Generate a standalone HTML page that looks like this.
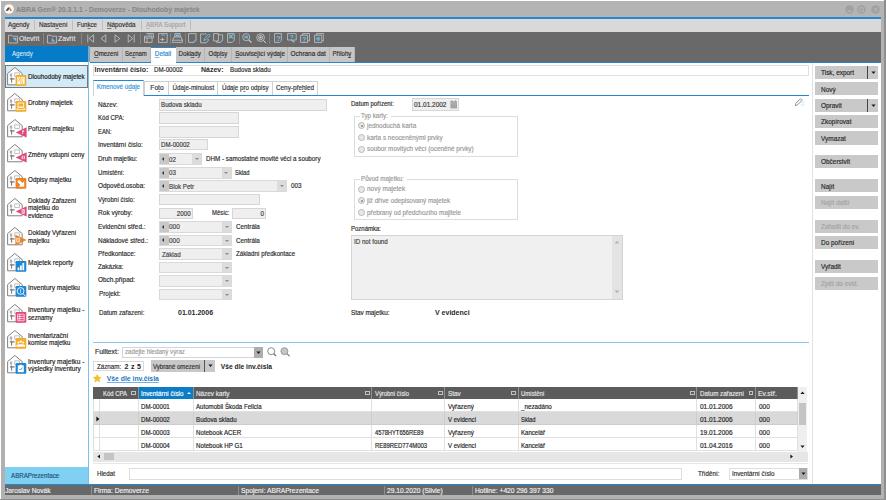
<!DOCTYPE html><html lang="cs"><head><meta charset="utf-8"><title>ABRA Gen - Dlouhodobý majetek</title><style>
*{box-sizing:border-box;margin:0;padding:0}
html,body{width:886px;height:500px;overflow:hidden;background:#fff}
body{-webkit-text-stroke:0.18px currentColor;font-family:"Liberation Sans",sans-serif;font-size:7px;color:#2c2c2c;position:relative;line-height:9px}
.a{position:absolute}
.t{position:absolute;white-space:nowrap;line-height:9px;height:9px}
.b{font-weight:bold;-webkit-text-stroke:0}
.x{display:inline-block;transform:scaleX(.885);transform-origin:0 50%;white-space:nowrap}
.tab .x,.tab2 .x{transform-origin:50% 50%}
.f{position:absolute;background:#efefef;border:1px solid #d6d6d6}
.btn{position:absolute;background:#c9c9c9;left:815px;width:63.2px;height:13.2px;padding:2.3px 0 0 6px;color:#2a2a2a;white-space:nowrap}
.btn.d{color:#a4a4a4}
.tab{position:absolute;top:46.5px;height:15.7px;background:#c6c6c6;border-right:1px solid #b4b4b4;padding-top:2.6px;text-align:center;color:#2e2e2e;white-space:nowrap}
.tab2{position:absolute;top:80.5px;height:15px;background:#fff;border:1px solid #d0d0d0;border-bottom:none;padding-top:1.2px;text-align:center;color:#333;white-space:nowrap}
u{text-decoration:underline;text-decoration-thickness:0.5px;text-underline-offset:0.6px;text-decoration-color:color-mix(in srgb,currentColor 60%,transparent)}
.cb{position:absolute;background:#efefef;border:1px solid #d9d9d9}
.cb .l{position:absolute;left:0;top:0;bottom:0;width:8.6px;background:#c8c8c8}
.cb .l:after{content:"";position:absolute;left:2px;top:50%;margin-top:-2.2px;border:2.2px solid transparent;border-right:2.6px solid #333;border-left:none}
.cb .r{position:absolute;right:0;top:0;bottom:0;width:9px;background:#dcdcdc}
.cb .r:after{content:"";position:absolute;left:2.4px;top:50%;margin-top:-0.8px;border:2.1px solid transparent;border-top:2.2px solid #8a8a8a;border-bottom:none}
.cb span{position:absolute;top:0.2px;white-space:nowrap;color:#444}
.rd{position:absolute;width:7px;height:7px;border-radius:50%;border:1px solid #b8b8b8;background:#e8e8e8}
.rd.on:after{content:"";position:absolute;left:1.2px;top:1.2px;width:2.6px;height:2.6px;border-radius:50%;background:#8a8a8a}
.gt{color:#9a9a9a}
.hd{position:absolute;top:387px;height:12px;background:#5c5c5c;color:#e6e6e6;padding:1.7px 0 0 2.2px;white-space:nowrap;border-right:1px solid #909090}
.hd i{position:absolute;right:1.8px;top:4px;width:4.6px;height:4px;border:0.8px solid #c2c2c2}
.c{position:absolute;height:13px;padding:2.6px 0 0 2.4px;white-space:nowrap;color:#262626;border-right:1px solid #dcdcdc;border-bottom:1px solid #dcdcdc}
.st{position:absolute;top:485.2px;height:10px;color:#efefef;padding-top:0.4px;white-space:nowrap;font-size:7.5px}
.sb{position:absolute;left:27.5px;white-space:nowrap;color:#222;line-height:7.8px}
</style></head><body>
<div class="a" style="left:1px;top:1.3px;width:885px;height:499px;background:#b1b1b1;"></div>
<div class="a" style="left:1px;top:1.3px;width:885px;height:16px;background:#b4b4b4;"></div>
<div class="a" style="left:884.4px;top:0px;width:1.6px;height:500px;background:#8e8e8e;"></div>
<div class="a" style="left:0px;top:498.7px;width:886px;height:1.3px;background:#8e8e8e;"></div>
<svg class="a" style="left:3.8px;top:3.7px" width="10" height="10" viewBox="0 0 10 10"><circle cx="5" cy="5" r="4.8" fill="#fafafa"/><path d="M1.6 6.8 L4.2 3.2 L5.6 4.6 L4 6.8Z" fill="#444"/><path d="M4.2 3.2 L5.5 2.9 L8.2 6.8 L6.6 6.8Z" fill="#f08a1a"/><path d="M5.6 4.6 L7.2 6.8 L6.2 6.8Z" fill="#d23"/></svg>
<div class="t b" style="left:16px;top:4.6px;color:#858585;font-size:6.9px">ABRA Gen® 20.3.1.1 - Demoverze - Dlouhodobý majetek</div>
<svg class="a" style="left:844.8px;top:4.6px" width="9" height="9" viewBox="0 0 9 9"><circle cx="4.5" cy="4.5" r="4.3" fill="#a1a1a1"/><path d="M2.6 6.2h3.8" stroke="#bdbdbd" stroke-width="1" /></svg>
<svg class="a" style="left:857.3px;top:4.6px" width="9" height="9" viewBox="0 0 9 9"><circle cx="4.5" cy="4.5" r="4.3" fill="#a1a1a1"/><rect x="2.8" y="2.8" width="3.4" height="3.4" fill="none" stroke="#bdbdbd" stroke-width="0.8"/></svg>
<svg class="a" style="left:870.8px;top:4.6px" width="9" height="9" viewBox="0 0 9 9"><circle cx="4.5" cy="4.5" r="4.3" fill="#a1a1a1"/><path d="M2.8 2.8l3.4 3.4M6.2 2.8l-3.4 3.4" stroke="#bdbdbd" stroke-width="0.9"/></svg>
<div class="a" style="left:4.7px;top:17.2px;width:876.3px;height:1.6px;background:#2288d2;"></div>
<div class="a" style="left:4.7px;top:18.8px;width:876.3px;height:12.8px;background:#d9d9d9;"></div>
<div class="t " style="left:7.5px;top:20px;color:#333"><span class="x" style="transform:scaleX(0.901)">Agendy</span></div>
<div class="t " style="left:38.8px;top:20px;color:#333"><span class="x" style="transform:scaleX(0.901)">Nasta<u>v</u>ení</span></div>
<div class="t " style="left:77px;top:20px;color:#333"><span class="x" style="transform:scaleX(0.871)">Fun<u>k</u>ce</span></div>
<div class="t " style="left:106.9px;top:20px;color:#333"><span class="x" style="transform:scaleX(0.896)"><u>N</u>ápověda</span></div>
<div class="t " style="left:145.8px;top:20px;color:#a4a4a4"><span class="x" style="transform:scaleX(0.875)"><u>A</u>BRA Support</span></div>
<div class="a" style="left:34px;top:20.2px;width:1px;height:10px;background:#bdbdbd;"></div>
<div class="a" style="left:72.4px;top:20.2px;width:1px;height:10px;background:#bdbdbd;"></div>
<div class="a" style="left:102.4px;top:20.2px;width:1px;height:10px;background:#bdbdbd;"></div>
<div class="a" style="left:140.6px;top:20.2px;width:1px;height:10px;background:#bdbdbd;"></div>
<div class="a" style="left:190.2px;top:20.2px;width:1px;height:10px;background:#bdbdbd;"></div>
<div class="a" style="left:4.7px;top:31.6px;width:876.3px;height:14.2px;background:#696969;"></div>
<svg class="a" style="left:8px;top:33.6px" width="10" height="10" viewBox="0 0 10 10"><path d="M0.5 1.2h3.2l0.8 1h5v6.8h-9z" fill="none" stroke="#d6d6d6" stroke-width="0.7"/><path d="M4.4 3.8h4v4z" fill="#6cc4f2"/></svg>
<div class="t " style="left:19px;top:34.4px;color:#ececec;font-size:7.4px;-webkit-text-stroke:0.08px"><span class="x" style="transform:scaleX(0.92)">Otevřít</span></div>
<div class="a" style="left:43.4px;top:33.2px;width:1px;height:11px;background:#858585;"></div>
<svg class="a" style="left:47px;top:33.6px" width="10" height="10" viewBox="0 0 10 10"><path d="M0.5 1.2h3.2l0.8 1h5v6.8h-9z" fill="none" stroke="#d6d6d6" stroke-width="0.7"/><path d="M4.8 3.8l3.6 3.8h-3.6z" fill="#6cc4f2"/></svg>
<div class="t " style="left:58.4px;top:34.4px;color:#ececec;font-size:7.4px;-webkit-text-stroke:0.08px"><span class="x" style="transform:scaleX(0.92)">Zavřít</span></div>
<div class="a" style="left:81px;top:33.2px;width:1px;height:11px;background:#858585;"></div>
<div class="a" style="left:139.8px;top:33.2px;width:1px;height:11px;background:#858585;"></div>
<div class="a" style="left:169.6px;top:33.2px;width:1px;height:11px;background:#858585;"></div>
<div class="a" style="left:184.6px;top:33.2px;width:1px;height:11px;background:#858585;"></div>
<div class="a" style="left:238.8px;top:33.2px;width:1px;height:11px;background:#858585;"></div>
<div class="a" style="left:269px;top:33.2px;width:1px;height:11px;background:#858585;"></div>
<svg class="a" style="left:86.5px;top:34px" width="8" height="9" viewBox="0 0 8 9"><path d="M0.8 0.5v8" fill="none" stroke="#d6d6d6" stroke-width="0.7"/><path d="M6.6 0.8v7.4L2 4.5z" fill="none" stroke="#d6d6d6" stroke-width="0.7"/></svg>
<svg class="a" style="left:100.4px;top:34px" width="7" height="9" viewBox="0 0 7 9"><path d="M5.8 0.8v7.4L1 4.5z" fill="none" stroke="#d6d6d6" stroke-width="0.7"/></svg>
<svg class="a" style="left:114.4px;top:34px" width="7" height="9" viewBox="0 0 7 9"><path d="M1 0.8v7.4L5.8 4.5z" fill="none" stroke="#d6d6d6" stroke-width="0.7"/></svg>
<svg class="a" style="left:126.8px;top:34px" width="8" height="9" viewBox="0 0 8 9"><path d="M7.2 0.5v8" fill="none" stroke="#d6d6d6" stroke-width="0.7"/><path d="M1.2 0.8v7.4L5.8 4.5z" fill="none" stroke="#d6d6d6" stroke-width="0.7"/></svg>
<svg class="a" style="left:143.8px;top:33.4px" width="10" height="10" viewBox="0 0 10 10"><path d="M2.2 0.6h7.2v4.6" fill="none" stroke="#d6d6d6" stroke-width="0.7"/><path d="M0.5 3.2h7.6v6.2h-7.6z" fill="none" stroke="#d6d6d6" stroke-width="0.7"/><path d="M0.5 5h7.6M3 5v4.4" fill="none" stroke="#d6d6d6" stroke-width="0.7"/><path d="M4.2 2h3.6" stroke="#6cc4f2" stroke-width="0.9"/></svg>
<svg class="a" style="left:157.8px;top:33.4px" width="10" height="10" viewBox="0 0 10 10"><path d="M0.6 0.6h8.6v8.8h-8.6z" fill="none" stroke="#d6d6d6" stroke-width="0.7"/><path d="M2.2 6.4h4.4M4.4 4.6v3.6" fill="none" stroke="#d6d6d6" stroke-width="0.7"/><path d="M3 3c1-1.6 3-1.6 4 0" fill="none" stroke="#6cc4f2" stroke-width="0.9"/></svg>
<svg class="a" style="left:172px;top:33.4px" width="11" height="10" viewBox="0 0 11 10"><path d="M2.8 4V0.6h5.4V4" fill="none" stroke="#d6d6d6" stroke-width="0.7"/><path d="M0.6 7.2l1.4-3.2h7l1.4 3.2v2.2h-9.8z" fill="none" stroke="#d6d6d6" stroke-width="0.7"/><path d="M0.6 7.2h9.8" fill="none" stroke="#d6d6d6" stroke-width="0.7"/><path d="M3.6 1.6h3.8v2h-3.8z" fill="#6cc4f2"/></svg>
<svg class="a" style="left:188.2px;top:33.4px" width="9" height="10" viewBox="0 0 9 10"><path d="M0.6 0.6h7.4v6.6l-2 2.2h-5.4z" fill="none" stroke="#d6d6d6" stroke-width="0.7"/><path d="M5.6 9l2.6-2.6" stroke="#6cc4f2" stroke-width="0.9"/></svg>
<svg class="a" style="left:199.8px;top:33.2px" width="11" height="10.4" viewBox="0 0 11 10.4"><path d="M0.6 1h6M0.6 1v8.8h5.6l2-2V6" fill="none" stroke="#d6d6d6" stroke-width="0.7"/><path d="M4 7.4l0.6-2 4.2-4.4 1.4 1.4-4.2 4.4z" fill="none" stroke="#6cc4f2" stroke-width="0.9"/></svg>
<svg class="a" style="left:213.4px;top:33.4px" width="10.4" height="10" viewBox="0 0 10.4 10"><path d="M0.6 0.6h4.8v7.4h-4.8z" fill="none" stroke="#d6d6d6" stroke-width="0.7"/><path d="M5.4 1.8h4.2v5.6l-2 2h-3.8v-1.4" fill="none" stroke="#d6d6d6" stroke-width="0.7"/><path d="M7.4 9.2l2.2-2.2" stroke="#6cc4f2" stroke-width="0.9"/></svg>
<svg class="a" style="left:227.2px;top:33.4px" width="8" height="10" viewBox="0 0 8 10"><path d="M0.6 0.6h6.6v6.8l-2 2h-4.6z" fill="none" stroke="#d6d6d6" stroke-width="0.7"/><path d="M2 1.6l3.8 3.8M5.8 1.6l-3.8 3.8" stroke="#6cc4f2" stroke-width="1.3"/></svg>
<svg class="a" style="left:241.8px;top:33.2px" width="10" height="10.4" viewBox="0 0 10 10.4"><circle cx="4.2" cy="4.2" r="3.5" fill="none" stroke="#d6d6d6" stroke-width="0.7"/><path d="M6.8 6.8l2.6 2.8" stroke="#d6d6d6" stroke-width="1.1"/><rect x="2.4" y="2.8" width="3.6" height="2.6" fill="#6cc4f2" opacity="0.8"/></svg>
<svg class="a" style="left:255.6px;top:33.2px" width="10.4" height="10.4" viewBox="0 0 10.4 10.4"><circle cx="4.6" cy="4.6" r="3.9" fill="none" stroke="#d6d6d6" stroke-width="0.7"/><circle cx="4.6" cy="4.6" r="2.2" fill="none" stroke="#d6d6d6" stroke-width="0.7"/><path d="M4.6 3v3.2M3 4.6h3.2" stroke="#d6d6d6" stroke-width="0.7"/><path d="M7.6 7.6l2.2 2.4" stroke="#d6d6d6" stroke-width="1"/></svg>
<svg class="a" style="left:273.8px;top:33.4px" width="8.4" height="10" viewBox="0 0 8.4 10"><path d="M0.6 0.6h6.8v7l-1.8 1.8h-5z" fill="none" stroke="#d6d6d6" stroke-width="0.7"/><text x="1.9" y="8" font-family="Liberation Sans,sans-serif" font-weight="bold" font-size="8" fill="#6cc4f2">?</text></svg>
<svg class="a" style="left:286.8px;top:33.4px" width="10" height="10" viewBox="0 0 10 10"><path d="M0.6 0.6h8.6v6.4h-3.6l1.6 2.2-3.6-2.2h-3z" fill="none" stroke="#d6d6d6" stroke-width="0.7"/><text x="2.6" y="6.6" font-family="Liberation Sans,sans-serif" font-weight="bold" font-size="7.4" fill="#6cc4f2">?</text></svg>
<svg class="a" style="left:299.8px;top:33.4px" width="10.2" height="10" viewBox="0 0 10.2 10"><path d="M2.6 2V0.6h7v7.2h-1.6" fill="none" stroke="#d6d6d6" stroke-width="0.7"/><path d="M0.6 2.2h7v7.2h-7z" fill="none" stroke="#d6d6d6" stroke-width="0.7"/><text x="2" y="8.8" font-family="Liberation Sans,sans-serif" font-weight="bold" font-size="7.6" fill="#6cc4f2">?</text></svg>
<svg class="a" style="left:313.6px;top:33.4px" width="10.4" height="10" viewBox="0 0 10.4 10"><path d="M2.6 2V0.6h7.2v7.2h-1.6" fill="none" stroke="#d6d6d6" stroke-width="0.7"/><path d="M0.6 2.2h7.2v7.2h-7.2z" fill="none" stroke="#d6d6d6" stroke-width="0.7"/><path d="M4.2 4.2v3.2M2.6 5.8h3.2" stroke="#6cc4f2" stroke-width="0.9"/><circle cx="4.2" cy="5.8" r="1.7" fill="none" stroke="#6cc4f2" stroke-width="0.6"/></svg>
<div class="a" style="left:4.7px;top:45.6px;width:83.9px;height:17px;background:#067bc8;"></div>
<div class="a" style="left:88.2px;top:45.6px;width:1.2px;height:17px;background:#5fb4e6;"></div>
<div class="t " style="left:12px;top:49.4px;color:#f2f8fc;font-size:7px;-webkit-text-stroke:0"><span class="x" style="transform:scaleX(0.876)">Agendy</span></div>
<div class="a" style="left:4.7px;top:62.4px;width:83.7px;height:422px;background:#fff;"></div>
<div class="a" style="left:88.2px;top:62.4px;width:1.2px;height:422px;background:#7cc0ea;"></div>
<div class="a" style="left:89.4px;top:45.8px;width:1.6px;height:439px;background:#fff;"></div>
<div class="a" style="left:89.4px;top:45.8px;width:2px;height:16.6px;background:#9a9a9a;"></div>
<div class="a" style="left:5px;top:65px;width:82.6px;height:22.6px;background:#d3ebf7;border:1px solid #787878"></div>
<svg class="a" style="left:6.6px;top:67.10000000000001px" width="20" height="19.6" viewBox="0 0 20 19.6"><path d="M0.6 6.6L7.9 0.5l7.3 6.1v11.2H0.6z" fill="#fdfdfd" stroke="#747474" stroke-width="0.9"/><rect x="3.2" y="7" width="1.6" height="2" fill="none" stroke="#8a8a8a" stroke-width="0.6"/><path d="M4 9l0.6 2.6" stroke="#9a9a9a" stroke-width="0.6"/><rect x="7.8" y="5.9" width="4.6" height="3.8" fill="none" stroke="#9a9a9a" stroke-width="0.6"/><path d="M2.9 11.9h4.6" stroke="#555" stroke-width="1" fill="none"/><path d="M4.6 11.9v3.8" stroke="#666" stroke-width="0.9" fill="none"/><rect x="8.6" y="8" width="10.7" height="10.8" rx="1" fill="#f3ad2c"/><rect x="10.2" y="9.8" width="7.4" height="7.4" fill="#fff" opacity="0.92"/><path d="M11.6 10l2.6 7M13.4 10l2.6 7M10.4 14.4l3-2.4" stroke="#f3ad2c" stroke-width="0.7" fill="none"/><rect x="15" y="10.6" width="1.6" height="1.6" fill="#f8cf7c"/></svg>
<div class="sb" style="top:73.2px;line-height:7.6px"><span class="x" style="transform:scaleX(0.888)">Dlouhodobý majetek</span></div>
<svg class="a" style="left:6.6px;top:92.9px" width="20" height="19.6" viewBox="0 0 20 19.6"><path d="M0.6 6.6L7.9 0.5l7.3 6.1v11.2H0.6z" fill="#fdfdfd" stroke="#747474" stroke-width="0.9"/><rect x="3.2" y="7" width="1.6" height="2" fill="none" stroke="#8a8a8a" stroke-width="0.6"/><path d="M4 9l0.6 2.6" stroke="#9a9a9a" stroke-width="0.6"/><rect x="7.8" y="5.9" width="4.6" height="3.8" fill="none" stroke="#9a9a9a" stroke-width="0.6"/><path d="M2.9 11.9h4.6" stroke="#555" stroke-width="1" fill="none"/><path d="M4.6 11.9v3.8" stroke="#666" stroke-width="0.9" fill="none"/><rect x="8.6" y="8" width="10.7" height="10.8" rx="1" fill="#f3ad2c"/><path d="M11 10h5.6v4h-5.6zM9.8 16.6l1.2-2.2h5.6l1.2 2.2z" stroke="#fff" fill="none" stroke-width="0.8"/></svg>
<div class="sb" style="top:99.0px;line-height:7.6px"><span class="x" style="transform:scaleX(0.914)">Drobný majetek</span></div>
<svg class="a" style="left:6.6px;top:118.5px" width="20" height="19.6" viewBox="0 0 20 19.6"><path d="M0.6 6.6L7.9 0.5l7.3 6.1v11.2H0.6z" fill="#fdfdfd" stroke="#747474" stroke-width="0.9"/><rect x="3.2" y="7" width="1.6" height="2" fill="none" stroke="#8a8a8a" stroke-width="0.6"/><path d="M4 9l0.6 2.6" stroke="#9a9a9a" stroke-width="0.6"/><rect x="7.8" y="5.9" width="4.6" height="3.8" fill="none" stroke="#9a9a9a" stroke-width="0.6"/><path d="M2.9 11.9h4.6" stroke="#555" stroke-width="1" fill="none"/><path d="M4.6 11.9v3.8" stroke="#666" stroke-width="0.9" fill="none"/><path d="M19.6 8.2v10.4L8.8 13.4z" fill="#e4457a"/><path d="M15 12l2.2 0M16.4 11.4l-1 3.6" stroke="#fff" fill="none" stroke-width="0.8"/></svg>
<div class="sb" style="top:124.6px;line-height:7.6px"><span class="x" style="transform:scaleX(0.872)">Pořízení majetku</span></div>
<svg class="a" style="left:6.6px;top:144.29999999999998px" width="20" height="19.6" viewBox="0 0 20 19.6"><path d="M0.6 6.6L7.9 0.5l7.3 6.1v11.2H0.6z" fill="#fdfdfd" stroke="#747474" stroke-width="0.9"/><rect x="3.2" y="7" width="1.6" height="2" fill="none" stroke="#8a8a8a" stroke-width="0.6"/><path d="M4 9l0.6 2.6" stroke="#9a9a9a" stroke-width="0.6"/><rect x="7.8" y="5.9" width="4.6" height="3.8" fill="none" stroke="#9a9a9a" stroke-width="0.6"/><path d="M2.9 11.9h4.6" stroke="#555" stroke-width="1" fill="none"/><path d="M4.6 11.9v3.8" stroke="#666" stroke-width="0.9" fill="none"/><path d="M19.6 8.2v10.4L8.8 13.4z" fill="#e4457a"/><path d="M15.2 11.8v3.4M17.2 11.8v3.4" stroke="#fff" fill="none" stroke-width="1"/></svg>
<div class="sb" style="top:150.8px;line-height:7.6px"><span class="x" style="transform:scaleX(0.899)">Změny vstupní ceny</span></div>
<svg class="a" style="left:6.6px;top:169.89999999999998px" width="20" height="19.6" viewBox="0 0 20 19.6"><path d="M0.6 6.6L7.9 0.5l7.3 6.1v11.2H0.6z" fill="#fdfdfd" stroke="#747474" stroke-width="0.9"/><rect x="3.2" y="7" width="1.6" height="2" fill="none" stroke="#8a8a8a" stroke-width="0.6"/><path d="M4 9l0.6 2.6" stroke="#9a9a9a" stroke-width="0.6"/><rect x="7.8" y="5.9" width="4.6" height="3.8" fill="none" stroke="#9a9a9a" stroke-width="0.6"/><path d="M2.9 11.9h4.6" stroke="#555" stroke-width="1" fill="none"/><path d="M4.6 11.9v3.8" stroke="#666" stroke-width="0.9" fill="none"/><rect x="8.6" y="8" width="10.7" height="10.8" rx="1" fill="#ef8122"/><path d="M10.8 10.4l1.6-0.4 3 3 1.8-1.8v5.6h-5.6l1.8-1.8-3-3z" fill="#fff"/></svg>
<div class="sb" style="top:176.0px;line-height:7.6px"><span class="x" style="transform:scaleX(0.897)">Odpisy majetku</span></div>
<svg class="a" style="left:6.6px;top:198.1px" width="20" height="19.6" viewBox="0 0 20 19.6"><path d="M0.6 6.6L7.9 0.5l7.3 6.1v11.2H0.6z" fill="#fdfdfd" stroke="#747474" stroke-width="0.9"/><rect x="3.2" y="7" width="1.6" height="2" fill="none" stroke="#8a8a8a" stroke-width="0.6"/><path d="M4 9l0.6 2.6" stroke="#9a9a9a" stroke-width="0.6"/><rect x="7.8" y="5.9" width="4.6" height="3.8" fill="none" stroke="#9a9a9a" stroke-width="0.6"/><path d="M2.9 11.9h4.6" stroke="#555" stroke-width="1" fill="none"/><path d="M4.6 11.9v3.8" stroke="#666" stroke-width="0.9" fill="none"/><path d="M19.6 8.2v10.4L8.8 13.4z" fill="#e4457a"/><path d="M15 11.6h2.4v3.8h-2.4zM16.2 11.6v3.8" stroke="#fff" fill="none" stroke-width="0.7"/></svg>
<div class="sb" style="top:196.6px;line-height:7.6px"><span class="x" style="transform:scaleX(0.877)">Doklady Zařazení</span><br><span class="x" style="transform:scaleX(0.902)">majetku do</span><br><span class="x" style="transform:scaleX(0.903)">evidence</span></div>
<svg class="a" style="left:6.6px;top:226.7px" width="20" height="19.6" viewBox="0 0 20 19.6"><path d="M0.6 6.6L7.9 0.5l7.3 6.1v11.2H0.6z" fill="#fdfdfd" stroke="#747474" stroke-width="0.9"/><rect x="3.2" y="7" width="1.6" height="2" fill="none" stroke="#8a8a8a" stroke-width="0.6"/><path d="M4 9l0.6 2.6" stroke="#9a9a9a" stroke-width="0.6"/><rect x="7.8" y="5.9" width="4.6" height="3.8" fill="none" stroke="#9a9a9a" stroke-width="0.6"/><path d="M2.9 11.9h4.6" stroke="#555" stroke-width="1" fill="none"/><path d="M4.6 11.9v3.8" stroke="#666" stroke-width="0.9" fill="none"/><path d="M8.4 7.8v10.6L19.6 13.1z" fill="#ef8122"/><path d="M9.6 11.2h3v3.8h-3zM11.1 11.2v3.8" stroke="#fff" fill="none" stroke-width="0.7"/></svg>
<div class="sb" style="top:229.0px;line-height:7.6px"><span class="x" style="transform:scaleX(0.884)">Doklady Vyřazení</span><br><span class="x" style="transform:scaleX(0.869)">majetku</span></div>
<svg class="a" style="left:6.6px;top:252.7px" width="20" height="19.6" viewBox="0 0 20 19.6"><path d="M0.6 6.6L7.9 0.5l7.3 6.1v11.2H0.6z" fill="#fdfdfd" stroke="#747474" stroke-width="0.9"/><rect x="3.2" y="7" width="1.6" height="2" fill="none" stroke="#8a8a8a" stroke-width="0.6"/><path d="M4 9l0.6 2.6" stroke="#9a9a9a" stroke-width="0.6"/><rect x="7.8" y="5.9" width="4.6" height="3.8" fill="none" stroke="#9a9a9a" stroke-width="0.6"/><path d="M2.9 11.9h4.6" stroke="#555" stroke-width="1" fill="none"/><path d="M4.6 11.9v3.8" stroke="#666" stroke-width="0.9" fill="none"/><rect x="8.6" y="8" width="10.7" height="10.8" rx="1" fill="#1d86d6"/><path d="M10.6 14.6h1.8v2.6h-1.8zM13 12.6h1.8v4.6h-1.8zM15.4 10h1.8v7.2h-1.8z" fill="#fff"/></svg>
<div class="sb" style="top:258.7px;line-height:7.6px"><span class="x" style="transform:scaleX(0.939)">Majetek reporty</span></div>
<svg class="a" style="left:6.6px;top:278.4px" width="20" height="19.6" viewBox="0 0 20 19.6"><path d="M0.6 6.6L7.9 0.5l7.3 6.1v11.2H0.6z" fill="#fdfdfd" stroke="#747474" stroke-width="0.9"/><rect x="3.2" y="7" width="1.6" height="2" fill="none" stroke="#8a8a8a" stroke-width="0.6"/><path d="M4 9l0.6 2.6" stroke="#9a9a9a" stroke-width="0.6"/><rect x="7.8" y="5.9" width="4.6" height="3.8" fill="none" stroke="#9a9a9a" stroke-width="0.6"/><path d="M2.9 11.9h4.6" stroke="#555" stroke-width="1" fill="none"/><path d="M4.6 11.9v3.8" stroke="#666" stroke-width="0.9" fill="none"/><rect x="8.6" y="8" width="10.7" height="10.8" rx="1" fill="#1d86d6"/><circle cx="13.6" cy="13" r="3.4" stroke="#fff" fill="none" stroke-width="0.9"/><path d="M16 15.6l2.2 2.4" stroke="#fff" fill="none" stroke-width="1"/><path d="M13.6 11v4" stroke="#fff" fill="none" stroke-width="0.7"/></svg>
<div class="sb" style="top:284.4px;line-height:7.6px"><span class="x" style="transform:scaleX(0.939)">Inventury majetku</span></div>
<svg class="a" style="left:6.6px;top:304.0px" width="20" height="19.6" viewBox="0 0 20 19.6"><path d="M0.6 6.6L7.9 0.5l7.3 6.1v11.2H0.6z" fill="#fdfdfd" stroke="#747474" stroke-width="0.9"/><rect x="3.2" y="7" width="1.6" height="2" fill="none" stroke="#8a8a8a" stroke-width="0.6"/><path d="M4 9l0.6 2.6" stroke="#9a9a9a" stroke-width="0.6"/><rect x="7.8" y="5.9" width="4.6" height="3.8" fill="none" stroke="#9a9a9a" stroke-width="0.6"/><path d="M2.9 11.9h4.6" stroke="#555" stroke-width="1" fill="none"/><path d="M4.6 11.9v3.8" stroke="#666" stroke-width="0.9" fill="none"/><rect x="8.6" y="8" width="10.7" height="10.8" rx="1" fill="#e4457a"/><path d="M10.6 10.2h6.6v6.6h-6.6zM10.6 12.4h6.6M10.6 14.6h6.6M12.8 10.2v6.6" stroke="#fff" fill="none" stroke-width="0.7"/></svg>
<div class="sb" style="top:306.1px;line-height:7.6px"><span class="x" style="transform:scaleX(0.947)">Inventury majetku -</span><br><span class="x" style="transform:scaleX(0.875)">seznamy</span></div>
<svg class="a" style="left:6.6px;top:329.7px" width="20" height="19.6" viewBox="0 0 20 19.6"><path d="M0.6 6.6L7.9 0.5l7.3 6.1v11.2H0.6z" fill="#fdfdfd" stroke="#747474" stroke-width="0.9"/><rect x="3.2" y="7" width="1.6" height="2" fill="none" stroke="#8a8a8a" stroke-width="0.6"/><path d="M4 9l0.6 2.6" stroke="#9a9a9a" stroke-width="0.6"/><rect x="7.8" y="5.9" width="4.6" height="3.8" fill="none" stroke="#9a9a9a" stroke-width="0.6"/><path d="M2.9 11.9h4.6" stroke="#555" stroke-width="1" fill="none"/><path d="M4.6 11.9v3.8" stroke="#666" stroke-width="0.9" fill="none"/><rect x="8.6" y="8" width="10.7" height="10.8" rx="1" fill="#f3ad2c"/><circle cx="11.4" cy="12.6" r="1" fill="#fff"/><circle cx="13.8" cy="11.6" r="1.2" fill="#fff"/><circle cx="16.2" cy="12.6" r="1" fill="#fff"/><path d="M9.6 16.8v-1.6c0-1.4 8.4-1.4 8.4 0v1.6z" fill="#fff"/></svg>
<div class="sb" style="top:331.8px;line-height:7.6px"><span class="x" style="transform:scaleX(0.922)">Inventarizační</span><br><span class="x" style="transform:scaleX(0.874)">komise majetku</span></div>
<svg class="a" style="left:6.6px;top:355.3px" width="20" height="19.6" viewBox="0 0 20 19.6"><path d="M0.6 6.6L7.9 0.5l7.3 6.1v11.2H0.6z" fill="#fdfdfd" stroke="#747474" stroke-width="0.9"/><rect x="3.2" y="7" width="1.6" height="2" fill="none" stroke="#8a8a8a" stroke-width="0.6"/><path d="M4 9l0.6 2.6" stroke="#9a9a9a" stroke-width="0.6"/><rect x="7.8" y="5.9" width="4.6" height="3.8" fill="none" stroke="#9a9a9a" stroke-width="0.6"/><path d="M2.9 11.9h4.6" stroke="#555" stroke-width="1" fill="none"/><path d="M4.6 11.9v3.8" stroke="#666" stroke-width="0.9" fill="none"/><rect x="8.6" y="8" width="10.7" height="10.8" rx="1" fill="#1d86d6"/><rect x="10.8" y="10.4" width="6" height="6.8" fill="#fff"/><path d="M12.4 13.8l1 1.2 2-2.4" stroke="#1d86d6" stroke-width="0.8" fill="none"/><path d="M12.6 9.8h2.4v1.2h-2.4z" fill="#fff"/></svg>
<div class="sb" style="top:357.6px;line-height:7.6px"><span class="x" style="transform:scaleX(0.947)">Inventury majetku -</span><br><span class="x" style="transform:scaleX(0.923)">výsledky inventury</span></div>
<div class="a" style="left:4.7px;top:467px;width:83.7px;height:17.4px;background:#7fd0f2;"></div>
<div class="t " style="left:11.4px;top:471.4px;color:#1f5478;font-size:7px"><span class="x">ABRAPrezentace</span></div>
<div class="a" style="left:91px;top:45.8px;width:720.5px;height:439px;background:#fff;"></div>
<div class="a" style="left:90px;top:45.8px;width:791px;height:16px;background:#696969;"></div>
<div class="tab" style="left:90.2px;width:32.39999999999999px"><span class="x" style="transform:scaleX(0.866)"><u>O</u>mezení</span></div>
<div class="tab" style="left:122.6px;width:28.099999999999994px"><span class="x" style="transform:scaleX(0.845)">Se<u>z</u>nam</span></div>
<div class="tab" style="left:150.7px;width:24.900000000000006px;background:#fff;color:#2a8ad4;border-right:none;border-top:1.4px solid #2a8ad4;height:17px;padding-top:1.4px"><span class="x" style="transform:scaleX(0.916)"><u>D</u>etail</span></div>
<div class="tab" style="left:175.6px;width:29.30000000000001px"><span class="x" style="transform:scaleX(0.882)">Dokl<u>a</u>dy</span></div>
<div class="tab" style="left:204.9px;width:26.900000000000006px"><span class="x" style="transform:scaleX(0.858)">Odp<u>i</u>sy</span></div>
<div class="tab" style="left:231.8px;width:55.80000000000001px"><span class="x" style="transform:scaleX(0.887)"><u>S</u>ouvisející výdaje</span></div>
<div class="tab" style="left:287.6px;width:42.69999999999999px"><span class="x" style="transform:scaleX(0.916)">Ochrana dat</span></div>
<div class="tab" style="left:330.3px;width:25.0px"><span class="x" style="transform:scaleX(0.853)">Příloh<u>y</u></span></div>
<div class="a" style="left:90px;top:61.6px;width:60.7px;height:1.5px;background:#2288d2;"></div>
<div class="a" style="left:175.6px;top:61.6px;width:705.4px;height:1.5px;background:#2288d2;"></div>
<div class="a" style="left:811.8px;top:63px;width:1.4px;height:421.6px;background:#e2e2e2;"></div>
<div class="a" style="left:812.8px;top:63px;width:68.2px;height:421.6px;background:#fff;"></div>
<div class="a" style="left:92.5px;top:64.6px;width:716px;height:11px;background:#fff;border:1px solid #e0e0e0"></div>
<div class="t b" style="left:94.6px;top:65px;color:#2e2e2e;font-size:7px">Inventární číslo:</div>
<div class="t " style="left:153.6px;top:65px;"><span class="x" style="transform:scaleX(0.881)">DM-00002</span></div>
<div class="t b" style="left:201px;top:65px;color:#2e2e2e;font-size:7px">Název:</div>
<div class="t " style="left:230.4px;top:65px;"><span class="x">Budova skladu</span></div>
<div class="a" style="left:92.5px;top:94.8px;width:716px;height:1.4px;background:#2288d2;"></div>
<div class="tab2" style="left:93.2px;width:50.8px;color:#3a96d8;border-top:1.4px solid #2288d2;top:80px;height:16.4px;padding-top:1.4px"><span class="x" style="transform:scaleX(0.892)">Kmenové ú<u>d</u>aje</span></div>
<div class="tab2" style="left:144px;width:25.30000000000001px;height:14.4px"><span class="x" style="transform:scaleX(0.949)">Fo<u>t</u>o</span></div>
<div class="tab2" style="left:168.3px;width:50.099999999999994px;height:14.4px"><span class="x" style="transform:scaleX(0.889)">Úda<u>j</u>e-minulost</span></div>
<div class="tab2" style="left:217.4px;width:55.20000000000002px;height:14.4px"><span class="x" style="transform:scaleX(0.889)">Údaje p<u>r</u>o odpisy</span></div>
<div class="tab2" style="left:271.6px;width:46.299999999999955px;height:14.4px"><span class="x" style="transform:scaleX(0.904)">Ceny-pře<u>h</u>led</span></div>
<svg class="a" style="left:794px;top:97.4px" width="11" height="10" viewBox="0 0 11 10"><path d="M1.2 8.6l0.6-2.2 4.6-4.6 1.6 1.6-4.6 4.6z" fill="none" stroke="#666" stroke-width="0.7"/><path d="M7 2v7M8.6 2v7M10 2v7" stroke="#9ccdf0" stroke-width="0.5" stroke-dasharray="0.8 0.8"/></svg>
<div class="t " style="left:97.6px;top:99.9px;"><span class="x" style="transform:scaleX(0.895)">Název:</span></div>
<div class="f" style="left:159px;top:99.4px;width:167.8px;height:11.3px;padding-left:1.4px;line-height:8.9px;padding-top:0.9px;color:#3a3a3a;white-space:nowrap"><span class="x">Budova skladu</span></div>
<div class="t " style="left:97.6px;top:113.30000000000001px;"><span class="x" style="transform:scaleX(0.867)">Kód CPA:</span></div>
<div class="f" style="left:159px;top:112.4px;width:79.6px;height:11.6px;padding-left:1.4px;line-height:9.2px;padding-top:0.9px;color:#3a3a3a;white-space:nowrap"></div>
<div class="t " style="left:97.6px;top:126.80000000000001px;"><span class="x" style="transform:scaleX(0.838)">EAN:</span></div>
<div class="f" style="left:159px;top:126px;width:79.6px;height:11.6px;padding-left:1.4px;line-height:9.2px;padding-top:0.9px;color:#3a3a3a;white-space:nowrap"></div>
<div class="t " style="left:97.6px;top:140.3px;"><span class="x" style="transform:scaleX(0.904)">Inventární číslo:</span></div>
<div class="f" style="left:159px;top:139.2px;width:49.2px;height:11.2px;padding-left:1.4px;line-height:8.8px;padding-top:0.9px;color:#3a3a3a;white-space:nowrap"><span class="x" style="transform:scaleX(0.881)">DM-00002</span></div>
<div class="t " style="left:97.6px;top:154.0px;"><span class="x" style="transform:scaleX(0.902)">Druh majetku:</span></div>
<div class="cb" style="left:159px;top:153.2px;width:43.4px;height:12px"><i class="l"></i><i class="r"></i><span style="left:9.4px"><span class="x">02</span></span></div>
<div class="t " style="left:206px;top:154.20000000000002px;"><span class="x" style="transform:scaleX(0.895)">DHM - samostatné movité věci a soubory</span></div>
<div class="t " style="left:97.6px;top:167.6px;"><span class="x" style="transform:scaleX(0.875)">Umístění:</span></div>
<div class="cb" style="left:159px;top:167px;width:72.6px;height:11.6px"><i class="l"></i><i class="r"></i><span style="left:9.4px"><span class="x">03</span></span></div>
<div class="t " style="left:235.2px;top:167.8px;"><span class="x" style="transform:scaleX(0.834)">Sklad</span></div>
<div class="t " style="left:97.6px;top:181.3px;"><span class="x" style="transform:scaleX(0.915)">Odpověd.osoba:</span></div>
<div class="cb" style="left:159px;top:180.3px;width:128.4px;height:11.6px"><i class="l"></i><i class="r"></i><span style="left:9.4px"><span class="x">Blok Petr</span></span></div>
<div class="t " style="left:290.8px;top:181.4px;"><span class="x" style="transform:scaleX(0.89)">003</span></div>
<div class="t " style="left:97.6px;top:194.70000000000002px;"><span class="x" style="transform:scaleX(0.863)">Výrobní číslo:</span></div>
<div class="f" style="left:159px;top:194.3px;width:101px;height:11.2px;padding-left:1.4px;line-height:8.8px;padding-top:0.9px;color:#3a3a3a;white-space:nowrap"></div>
<div class="t " style="left:97.6px;top:208.4px;"><span class="x" style="transform:scaleX(0.936)">Rok výroby:</span></div>
<div class="f" style="left:159px;top:207.6px;width:33.6px;height:11.6px;text-align:right;padding-right:1.2px;line-height:9.2px;padding-top:0.9px;color:#3a3a3a;white-space:nowrap"><span class="x" style="transform-origin:100% 50%">2000</span></div>
<div class="t " style="left:211.6px;top:208.4px;"><span class="x" style="transform:scaleX(0.844)">Měsíc:</span></div>
<div class="f" style="left:232.4px;top:207.6px;width:33.4px;height:11.6px;text-align:right;padding-right:1.2px;line-height:9.2px;padding-top:0.9px;color:#3a3a3a;white-space:nowrap"><span class="x" style="transform-origin:100% 50%">0</span></div>
<div class="t " style="left:97.6px;top:222.0px;"><span class="x" style="transform:scaleX(0.911)">Evidenční střed.:</span></div>
<div class="cb" style="left:159px;top:221.1px;width:73.2px;height:11.7px"><i class="l"></i><i class="r"></i><span style="left:9.4px"><span class="x" style="transform:scaleX(0.924)">000</span></span></div>
<div class="t " style="left:235.8px;top:222.20000000000002px;"><span class="x" style="transform:scaleX(0.899)">Centrála</span></div>
<div class="t " style="left:97.6px;top:235.70000000000002px;"><span class="x" style="transform:scaleX(0.918)">Nákladové střed.:</span></div>
<div class="cb" style="left:159px;top:234.6px;width:73.2px;height:11.6px"><i class="l"></i><i class="r"></i><span style="left:9.4px"><span class="x" style="transform:scaleX(0.924)">000</span></span></div>
<div class="t " style="left:235.8px;top:235.8px;"><span class="x" style="transform:scaleX(0.899)">Centrála</span></div>
<div class="t " style="left:97.6px;top:248.8px;"><span class="x" style="transform:scaleX(0.912)">Předkontace:</span></div>
<div class="cb" style="left:159px;top:248.2px;width:73.2px;height:11.6px"><i class="r"></i><span style="left:2.4px"><span class="x">Základ</span></span></div>
<div class="t " style="left:235.8px;top:249.0px;"><span class="x" style="transform:scaleX(0.878)">Základní předkontace</span></div>
<div class="t " style="left:97.6px;top:262.0px;"><span class="x" style="transform:scaleX(0.894)">Zakázka:</span></div>
<div class="cb" style="left:159px;top:261.7px;width:73.2px;height:11.5px"><i class="r"></i></div>
<div class="t " style="left:97.6px;top:275.4px;"><span class="x" style="transform:scaleX(0.917)">Obch.případ:</span></div>
<div class="cb" style="left:159px;top:275.2px;width:73.2px;height:11.5px"><i class="r"></i></div>
<div class="t " style="left:98.8px;top:288.59999999999997px;"><span class="x" style="transform:scaleX(0.91)">Projekt:</span></div>
<div class="cb" style="left:159px;top:288.7px;width:73.2px;height:11.5px"><i class="r"></i></div>
<div class="t " style="left:99.4px;top:308.2px;"><span class="x" style="transform:scaleX(0.886)">Datum zařazení:</span></div>
<div class="t b" style="left:178px;top:308.2px;color:#2a2a2a;font-size:7px">01.01.2006</div>
<div class="t " style="left:350.6px;top:99.2px;color:#2e2e2e"><span class="x" style="transform:scaleX(0.863)">Datum pořízení:</span></div>
<div class="f" style="left:412px;top:98.2px;width:46.8px;height:12.4px;padding-left:1.4px;line-height:10.0px;padding-top:0.9px;color:#3a3a3a;white-space:nowrap"><span class="x" style="transform:scaleX(0.927)">01.01.2002</span></div>
<svg class="a" style="left:449.6px;top:100px" width="7.4" height="8.8" viewBox="0 0 7.4 8.8"><rect x="0.4" y="1.2" width="6.6" height="7.2" fill="#a2a2a2"/><path d="M0.4 3h6.6" stroke="#cacaca" stroke-width="0.6"/><path d="M1.8 0.2v1.8M5.6 0.2v1.8" stroke="#9a9a9a" stroke-width="0.9"/><path d="M1.4 4.6h4.6M1.4 6.2h4.6" stroke="#b4b4b4" stroke-width="0.5"/></svg>
<div class="a" style="left:353.8px;top:116px;width:164px;height:41.400000000000006px;background:#fff;border:1px solid #dcdcdc"></div>
<div class="a" style="left:359.6px;top:115px;width:31px;height:3px;background:#fff;"></div>
<div class="t gt" style="left:361.2px;top:111.0px;"><span class="x">Typ karty:</span></div>
<div class="rd on" style="left:358.4px;top:122.4px"></div>
<div class="t gt" style="left:367.4px;top:121.00000000000001px;"><span class="x" style="transform:scaleX(0.916)">jednoduchá karta</span></div>
<div class="rd" style="left:358.4px;top:134.0px"></div>
<div class="t gt" style="left:367.4px;top:132.6px;"><span class="x" style="transform:scaleX(0.908)">karta s neoceněnými prvky</span></div>
<div class="rd" style="left:358.4px;top:145.8px"></div>
<div class="t gt" style="left:367.4px;top:144.4px;"><span class="x" style="transform:scaleX(0.904)">soubor movitých věcí (oceněné prvky)</span></div>
<div class="a" style="left:353.8px;top:179.1px;width:164px;height:41.099999999999994px;background:#fff;border:1px solid #dcdcdc"></div>
<div class="a" style="left:359.6px;top:178.1px;width:47px;height:3px;background:#fff;"></div>
<div class="t gt" style="left:361.2px;top:174.1px;"><span class="x">Původ majetku:</span></div>
<div class="rd" style="left:358.4px;top:185.8px"></div>
<div class="t gt" style="left:367.4px;top:184.4px;"><span class="x" style="transform:scaleX(0.926)">nový majetek</span></div>
<div class="rd on" style="left:358.4px;top:197.4px"></div>
<div class="t gt" style="left:367.4px;top:196.0px;"><span class="x" style="transform:scaleX(0.907)">již dříve odepisovaný majetek</span></div>
<div class="rd" style="left:358.4px;top:209.2px"></div>
<div class="t gt" style="left:367.4px;top:207.79999999999998px;"><span class="x" style="transform:scaleX(0.904)">přebraný od předchozího majitele</span></div>
<div class="t " style="left:350.6px;top:224.4px;color:#2e2e2e"><span class="x" style="transform:scaleX(0.854)">Poznámka:</span></div>
<div class="a" style="left:350.6px;top:235.3px;width:272px;height:64.4px;background:#f0f0f0;border:1px solid #d4d4d4"></div>
<div class="a" style="left:611.6px;top:236.2px;width:10.2px;height:62.6px;background:#e4e4e4;"></div>
<svg class="a" style="left:613.8px;top:240px" width="6" height="4" viewBox="0 0 6 4"><path d="M0.6 3.4L3 0.8l2.4 2.6z" fill="#b4b4b4"/></svg>
<svg class="a" style="left:613.8px;top:290.4px" width="6" height="4" viewBox="0 0 6 4"><path d="M0.6 0.6L3 3.2l2.4-2.6z" fill="#b4b4b4"/></svg>
<div class="t " style="left:353.8px;top:236.8px;color:#444"><span class="x">ID not found</span></div>
<div class="t " style="left:350.6px;top:308.2px;"><span class="x" style="transform:scaleX(0.91)">Stav majetku:</span></div>
<div class="t b" style="left:435px;top:308.2px;color:#2a2a2a;font-size:7px">V evidenci</div>
<div class="a" style="left:92.5px;top:341.6px;width:716px;height:1.1px;background:#8cc6ec;"></div>
<div class="t " style="left:95.4px;top:347.4px;color:#2e2e2e"><span class="x" style="transform:scaleX(0.971)">Fulltext:</span></div>
<div class="a" style="left:122.4px;top:347px;width:140.2px;height:10.6px;background:#fff;border:1px solid #d4d4d4"></div>
<div class="t " style="left:124.8px;top:347.4px;color:#9a9a9a"><span class="x">zadejte hledaný výraz</span></div>
<div class="a" style="left:253.6px;top:346.6px;width:9px;height:11.2px;background:#adadad;"></div>
<svg class="a" style="left:255.6px;top:350.6px" width="5" height="3.4" viewBox="0 0 5 3.4"><path d="M0.4 0.4h4.2L2.5 3z" fill="#1a1a1a"/></svg>
<svg class="a" style="left:267.2px;top:347.2px" width="9.8" height="9.8" viewBox="0 0 9.8 9.8"><circle cx="4.2" cy="4.2" r="3.5" fill="none" stroke="#6e6e6e" stroke-width="0.8"/><path d="M6.8 6.8l2.4 2.4" stroke="#6e6e6e" stroke-width="1.2"/></svg>
<svg class="a" style="left:280.4px;top:347.2px" width="10.4" height="9.8" viewBox="0 0 10.4 9.8"><circle cx="4.4" cy="4.2" r="3.5" fill="#c6c6c6" stroke="#8a8a8a" stroke-width="0.8"/><path d="M7 6.8l2.6 2.4" stroke="#8a8a8a" stroke-width="1.2"/></svg>
<div class="a" style="left:92.6px;top:361px;width:51px;height:10.2px;background:#fff;border:1px solid #d8d8d8"></div>
<div class="t " style="left:96.8px;top:361.5px;color:#2e2e2e"><span class="x">Záznam:</span></div>
<div class="t b" style="left:124.6px;top:361.5px;color:#222;font-size:7px;letter-spacing:0.3px">2 z 5</div>
<div class="a" style="left:150.8px;top:360.4px;width:53.4px;height:11.2px;background:#c8c8c8;"></div>
<div class="t " style="left:153.4px;top:361.5px;color:#333"><span class="x" style="transform:scaleX(0.864)">Vybrané omezení</span></div>
<div class="a" style="left:204.2px;top:360.4px;width:0.9px;height:11.2px;background:#555;"></div>
<div class="a" style="left:205.1px;top:360.4px;width:10.4px;height:11.2px;background:#c8c8c8;"></div>
<svg class="a" style="left:207.8px;top:364.4px" width="5" height="3.4" viewBox="0 0 5 3.4"><path d="M0.4 0.4h4.2L2.5 3z" fill="#1a1a1a"/></svg>
<div class="t b" style="left:220.8px;top:361.5px;color:#222;font-size:6.7px">Vše dle inv.čísla</div>
<svg class="a" style="left:92.6px;top:374.2px" width="8.4" height="8.4" viewBox="0 0 8.4 8.4"><path d="M4.2 0.4l1.15 2.6 2.8 0.3-2.1 1.9 0.6 2.8-2.45-1.45-2.45 1.45 0.6-2.8-2.1-1.9 2.8-0.3z" fill="#f6c428" stroke="#e0a818" stroke-width="0.4"/></svg>
<div class="t b" style="left:106.8px;top:374.09999999999997px;color:#1a78c8;font-size:6.8px"><u>Vše dle inv.čísla</u></div>
<div class="a" style="left:93px;top:387.2px;width:705px;height:11.8px;background:#5c5c5c;"></div>
<div class="a" style="left:93px;top:399px;width:705px;height:52.4px;background:#fff;border-left:1px solid #dcdcdc"></div>
<div class="hd" style="left:93px;width:7.200000000000003px;border-right:none;"></div>
<div class="hd" style="left:100.2px;width:38.60000000000001px;padding-left:2.8px;"><span class="x" style="transform:scaleX(0.849)">Kód CPA</span><i></i></div>
<div class="hd" style="left:138.8px;width:54.79999999999998px;background:#0a7cc8;color:#fff;"><span class="x" style="transform:scaleX(0.895)">Inventární číslo</span><b style="position:absolute;right:1.6px;top:4.8px;border:2px solid transparent;border-bottom:2.6px solid #fff;border-top:none"></b></div>
<div class="hd" style="left:193.6px;width:178.79999999999998px;"><span class="x" style="transform:scaleX(0.906)">Název karty</span><i></i></div>
<div class="hd" style="left:372.4px;width:73.0px;"><span class="x" style="transform:scaleX(0.838)">Výrobní číslo</span><i></i></div>
<div class="hd" style="left:445.4px;width:73.20000000000005px;"><span class="x" style="transform:scaleX(0.906)">Stav</span><i></i></div>
<div class="hd" style="left:518.6px;width:178.79999999999995px;"><span class="x" style="transform:scaleX(0.832)">Umístění</span><i></i></div>
<div class="hd" style="left:697.4px;width:58.80000000000007px;"><span class="x" style="transform:scaleX(0.888)">Datum zařazení</span><i></i></div>
<div class="hd" style="left:756.2px;width:41.799999999999955px;"><span class="x" style="transform:scaleX(0.973)">Ev.stř.</span></div>
<div class="c" style="left:93px;top:399.0px;width:7.200000000000003px;border-color:#e0e0e0"></div>
<div class="c" style="left:100.2px;top:399.0px;width:38.60000000000001px;border-color:#e0e0e0"></div>
<div class="c" style="left:138.8px;top:399.0px;width:54.79999999999998px;border-color:#e0e0e0"><span class="x" style="transform:scaleX(0.881)">DM-00001</span></div>
<div class="c" style="left:193.6px;top:399.0px;width:178.79999999999998px;border-color:#e0e0e0"><span class="x" style="transform:scaleX(0.874)">Automobil Škoda Felicia</span></div>
<div class="c" style="left:372.4px;top:399.0px;width:73.0px;border-color:#e0e0e0"></div>
<div class="c" style="left:445.4px;top:399.0px;width:73.20000000000005px;border-color:#e0e0e0"><span class="x" style="transform:scaleX(0.892)">Vyřazený</span></div>
<div class="c" style="left:518.6px;top:399.0px;width:178.79999999999995px;border-color:#e0e0e0"><span class="x" style="transform:scaleX(0.889)">_nezadáno</span></div>
<div class="c" style="left:697.4px;top:399.0px;width:58.80000000000007px;border-color:#e0e0e0"><span class="x" style="transform:scaleX(0.93)">01.01.2006</span></div>
<div class="c" style="left:756.2px;top:399.0px;width:41.799999999999955px;border-color:#e0e0e0"><span class="x" style="transform:scaleX(0.924)">000</span></div>
<div class="a" style="left:93px;top:412.05px;width:705px;height:13px;background:#d9d9d9;"></div>
<div class="c" style="left:93px;top:412.05px;width:7.200000000000003px;border-color:#cdcdcd"></div>
<div class="c" style="left:100.2px;top:412.05px;width:38.60000000000001px;border-color:#cdcdcd"></div>
<div class="c" style="left:138.8px;top:412.05px;width:54.79999999999998px;border-color:#cdcdcd"><span class="x" style="transform:scaleX(0.881)">DM-00002</span></div>
<div class="c" style="left:193.6px;top:412.05px;width:178.79999999999998px;border-color:#cdcdcd"><span class="x">Budova skladu</span></div>
<div class="c" style="left:372.4px;top:412.05px;width:73.0px;border-color:#cdcdcd"></div>
<div class="c" style="left:445.4px;top:412.05px;width:73.20000000000005px;border-color:#cdcdcd"><span class="x" style="transform:scaleX(0.867)">V evidenci</span></div>
<div class="c" style="left:518.6px;top:412.05px;width:178.79999999999995px;border-color:#cdcdcd"><span class="x" style="transform:scaleX(0.834)">Sklad</span></div>
<div class="c" style="left:697.4px;top:412.05px;width:58.80000000000007px;border-color:#cdcdcd"><span class="x" style="transform:scaleX(0.93)">01.01.2006</span></div>
<div class="c" style="left:756.2px;top:412.05px;width:41.799999999999955px;border-color:#cdcdcd"><span class="x" style="transform:scaleX(0.924)">000</span></div>
<div class="c" style="left:93px;top:425.1px;width:7.200000000000003px;border-color:#e0e0e0"></div>
<div class="c" style="left:100.2px;top:425.1px;width:38.60000000000001px;border-color:#e0e0e0"></div>
<div class="c" style="left:138.8px;top:425.1px;width:54.79999999999998px;border-color:#e0e0e0"><span class="x" style="transform:scaleX(0.881)">DM-00003</span></div>
<div class="c" style="left:193.6px;top:425.1px;width:178.79999999999998px;border-color:#e0e0e0"><span class="x">Notebook ACER</span></div>
<div class="c" style="left:372.4px;top:425.1px;width:73.0px;border-color:#e0e0e0"><span class="x" style="transform:scaleX(0.825)">4578HYT656RE89</span></div>
<div class="c" style="left:445.4px;top:425.1px;width:73.20000000000005px;border-color:#e0e0e0"><span class="x" style="transform:scaleX(0.892)">Vyřazený</span></div>
<div class="c" style="left:518.6px;top:425.1px;width:178.79999999999995px;border-color:#e0e0e0"><span class="x" style="transform:scaleX(0.868)">Kancelář</span></div>
<div class="c" style="left:697.4px;top:425.1px;width:58.80000000000007px;border-color:#e0e0e0"><span class="x" style="transform:scaleX(0.93)">19.01.2006</span></div>
<div class="c" style="left:756.2px;top:425.1px;width:41.799999999999955px;border-color:#e0e0e0"><span class="x" style="transform:scaleX(0.924)">000</span></div>
<div class="c" style="left:93px;top:438.15px;width:7.200000000000003px;border-color:#e0e0e0"></div>
<div class="c" style="left:100.2px;top:438.15px;width:38.60000000000001px;border-color:#e0e0e0"></div>
<div class="c" style="left:138.8px;top:438.15px;width:54.79999999999998px;border-color:#e0e0e0"><span class="x" style="transform:scaleX(0.881)">DM-00004</span></div>
<div class="c" style="left:193.6px;top:438.15px;width:178.79999999999998px;border-color:#e0e0e0"><span class="x">Notebook HP G1</span></div>
<div class="c" style="left:372.4px;top:438.15px;width:73.0px;border-color:#e0e0e0"><span class="x" style="transform:scaleX(0.846)">RE89RED774M003</span></div>
<div class="c" style="left:445.4px;top:438.15px;width:73.20000000000005px;border-color:#e0e0e0"><span class="x" style="transform:scaleX(0.867)">V evidenci</span></div>
<div class="c" style="left:518.6px;top:438.15px;width:178.79999999999995px;border-color:#e0e0e0"><span class="x" style="transform:scaleX(0.868)">Kancelář</span></div>
<div class="c" style="left:697.4px;top:438.15px;width:58.80000000000007px;border-color:#e0e0e0"><span class="x" style="transform:scaleX(0.93)">01.04.2016</span></div>
<div class="c" style="left:756.2px;top:438.15px;width:41.799999999999955px;border-color:#e0e0e0"><span class="x" style="transform:scaleX(0.924)">000</span></div>
<svg class="a" style="left:96.4px;top:416px" width="4" height="6" viewBox="0 0 4 6"><path d="M0.4 0.4v5.2L3.4 3z" fill="#111"/></svg>
<div class="a" style="left:798px;top:387.2px;width:9.4px;height:64.4px;background:#efefef;"></div>
<svg class="a" style="left:800.4px;top:390.6px" width="5" height="3.4" viewBox="0 0 5 3.4"><path d="M0.4 3h4.2L2.5 0.4z" fill="#1a1a1a"/></svg>
<div class="a" style="left:799.2px;top:402.6px;width:7px;height:22.6px;background:#c4c4c4;"></div>
<svg class="a" style="left:800.4px;top:444.6px" width="5" height="3.4" viewBox="0 0 5 3.4"><path d="M0.4 0.4h4.2L2.5 3z" fill="#1a1a1a"/></svg>
<div class="a" style="left:93px;top:452px;width:714.6px;height:9.6px;background:#e6e6e6;"></div>
<div class="a" style="left:93px;top:463px;width:715px;height:1px;background:#e6e6e6;"></div>
<svg class="a" style="left:97.4px;top:454.2px" width="3.4" height="5" viewBox="0 0 3.4 5"><path d="M3 0.4v4.2L0.4 2.5z" fill="#1a1a1a"/></svg>
<div class="a" style="left:104.2px;top:453.2px;width:9.6px;height:7.2px;background:#c4c4c4;"></div>
<svg class="a" style="left:790px;top:454.2px" width="3.4" height="5" viewBox="0 0 3.4 5"><path d="M0.4 0.4v4.2L3 2.5z" fill="#1a1a1a"/></svg>
<div class="t " style="left:97.4px;top:469.2px;color:#2e2e2e"><span class="x">Hledat</span></div>
<div class="a" style="left:129px;top:467.6px;width:552.6px;height:12px;background:#fff;border:1px solid #dedede"></div>
<div class="t " style="left:698.4px;top:469.2px;color:#2e2e2e"><span class="x">Třídění:</span></div>
<div class="a" style="left:729px;top:467.6px;width:78.6px;height:12px;background:#fff;border:1px solid #dedede"></div>
<div class="t " style="left:732px;top:469.2px;color:#333"><span class="x" style="transform:scaleX(0.895)">Inventární číslo</span></div>
<div class="a" style="left:799px;top:468.2px;width:8.2px;height:10.8px;background:#adadad;"></div>
<svg class="a" style="left:800.8px;top:472px" width="5" height="3.4" viewBox="0 0 5 3.4"><path d="M0.4 0.4h4.2L2.5 3z" fill="#1a1a1a"/></svg>
<div class="btn" style="top:66px"><span class="x" style="transform:scaleX(0.92)">Tisk, export</span></div>
<div class="a" style="left:866.8px;top:66px;width:1px;height:13.2px;background:#444;"></div>
<svg class="a" style="left:870.6px;top:71px" width="5" height="3.4" viewBox="0 0 5 3.4"><path d="M0.4 0.4h4.2L2.5 3z" fill="#1a1a1a"/></svg>
<div class="btn" style="top:82.3px"><span class="x" style="transform:scaleX(0.92)">Nový</span></div>
<div class="btn" style="top:98.7px"><span class="x" style="transform:scaleX(0.92)">Opravit</span></div>
<div class="a" style="left:866.8px;top:98.7px;width:1px;height:13.2px;background:#444;"></div>
<svg class="a" style="left:870.6px;top:103.7px" width="5" height="3.4" viewBox="0 0 5 3.4"><path d="M0.4 0.4h4.2L2.5 3z" fill="#1a1a1a"/></svg>
<div class="btn" style="top:115px"><span class="x" style="transform:scaleX(0.92)">Zkopírovat</span></div>
<div class="btn" style="top:131.4px"><span class="x" style="transform:scaleX(0.92)">Vymazat</span></div>
<div class="btn" style="top:155.2px"><span class="x" style="transform:scaleX(0.92)">Občerstvit</span></div>
<div class="btn" style="top:179.3px"><span class="x" style="transform:scaleX(0.92)">Najít</span></div>
<div class="btn d" style="top:195.8px"><span class="x" style="transform:scaleX(0.92)">Najít další</span></div>
<div class="btn d" style="top:219.6px"><span class="x" style="transform:scaleX(0.92)">Zařadit do ev.</span></div>
<div class="btn" style="top:236px"><span class="x" style="transform:scaleX(0.92)">Do pořízení</span></div>
<div class="btn" style="top:260px"><span class="x" style="transform:scaleX(0.92)">Vyřadit</span></div>
<div class="btn d" style="top:276.5px"><span class="x" style="transform:scaleX(0.92)">Zpět do evid.</span></div>
<div class="a" style="left:4.7px;top:484px;width:876.3px;height:1.2px;background:#2288d2;"></div>
<div class="a" style="left:4.7px;top:485.2px;width:876.3px;height:10px;background:#686868;"></div>
<div class="st" style="left:5.4px"><span class="x" style="transform:scaleX(0.89)">Jaroslav Novák</span></div>
<div class="st" style="left:94.2px"><span class="x" style="transform:scaleX(0.89)">Firma: Demoverze</span></div>
<div class="st" style="left:241px"><span class="x" style="transform:scaleX(0.89)">Spojení: ABRAPrezentace</span></div>
<div class="st" style="left:386.6px"><span class="x" style="transform:scaleX(0.89)">29.10.2020 (Silvie)</span></div>
<div class="st" style="left:475px"><span class="x" style="transform:scaleX(0.89)">Hotline: +420 296 397 330</span></div>
<div class="a" style="left:91.2px;top:485.6px;width:1px;height:9.4px;background:#8e8e8e;"></div>
<div class="a" style="left:238px;top:485.6px;width:1px;height:9.4px;background:#8e8e8e;"></div>
<div class="a" style="left:384px;top:485.6px;width:1px;height:9.4px;background:#8e8e8e;"></div>
<div class="a" style="left:472px;top:485.6px;width:1px;height:9.4px;background:#8e8e8e;"></div>
</body></html>
